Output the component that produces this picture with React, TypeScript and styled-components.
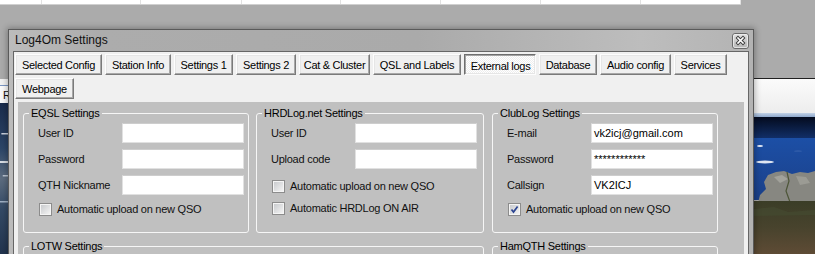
import styled, { createGlobalStyle, css } from "styled-components";

const GlobalStyle = createGlobalStyle`
  html, body { margin: 0; padding: 0; }
  body {
    background: #ababab;
    font-family: "Liberation Sans", Arial, sans-serif;
    font-size: 11px;
    color: #000;
  }
`;

const Desktop = styled.div`
  position: relative;
  width: 815px;
  height: 254px;
  overflow: hidden;
  background: #ababab;
`;

/* ---------- application window behind the dialog ---------- */

const BackApp = styled.div`
  display: grid;
  grid-template-rows: 5px 73px 1fr;
  height: 100%;
`;

const GridHead = styled.div`
  display: flex;
  width: 741px;
  background: #fff;
  border-bottom: 1px solid #d0d0d0;
`;

const GridCell = styled.div<{ $w: number }>`
  flex: none;
  width: ${(p) => p.$w}px;
  box-sizing: border-box;
  border-right: 1px solid #e2e2e2;
`;

const Panes = styled.div`
  grid-row: 3;
  display: flex;
  justify-content: space-between;
  min-height: 0;
`;

const Pane = styled.div<{ $w: number; $top: number; $rows: string }>`
  width: ${(p) => p.$w}px;
  margin-top: ${(p) => p.$top}px;
  display: grid;
  grid-template-rows: ${(p) => p.$rows};
  overflow: hidden;
`;

const LeftBand = styled.div`
  box-sizing: border-box;
  display: flex;
  align-items: flex-end;
  padding: 0 0 1px 3px;
  background: linear-gradient(#f2f2f2 0 6px, #7b97c4 6px 7px, #fbfbfb 7px);
  line-height: 13px;
  color: #111;
`;

const RightBand = styled.div`
  border-top: 1px solid #202020;
  background: linear-gradient(#fbfbfb, #ededed);
`;

const BlueRule = styled.div`
  background: linear-gradient(#c3d2e6, #8ea8cc);
`;

const MapSvg = styled.svg`
  width: 100%;
  height: 100%;
  display: block;
`;

function LeftMap() {
  return (
    <MapSvg viewBox="0 0 8 151" preserveAspectRatio="none">
      <defs>
        <linearGradient id="lm" x1="0" y1="0" x2="0" y2="1">
          <stop offset="0" stopColor="#1a2c4c" />
          <stop offset="0.3" stopColor="#2c4668" />
          <stop offset="0.5" stopColor="#5d6d80" />
          <stop offset="0.7" stopColor="#344a66" />
          <stop offset="1" stopColor="#22344e" />
        </linearGradient>
      </defs>
      <rect width="8" height="151" fill="url(#lm)" />
      <rect x="1" y="30" width="5" height="1.5" fill="#c8d0dc" />
      <rect x="0" y="58" width="7" height="2" fill="#d8dde4" />
      <rect x="2" y="72" width="5" height="1.5" fill="#b9c3d0" />
      <rect x="0" y="98" width="6" height="1.5" fill="#9fb0c4" />
    </MapSvg>
  );
}

function RightMap() {
  return (
    <MapSvg viewBox="0 0 61 137" preserveAspectRatio="none">
      <defs>
        <linearGradient id="rmSky" x1="0" y1="0" x2="0" y2="1">
          <stop offset="0" stopColor="#040b1e" />
          <stop offset="1" stopColor="#12306a" />
        </linearGradient>
        <linearGradient id="rmSea" x1="0" y1="0" x2="0" y2="1">
          <stop offset="0" stopColor="#1c4fa6" />
          <stop offset="1" stopColor="#1b4088" />
        </linearGradient>
        <linearGradient id="rmEarth" x1="0" y1="0" x2="0" y2="1">
          <stop offset="0" stopColor="#3b3d27" />
          <stop offset="0.5" stopColor="#48432d" />
          <stop offset="1" stopColor="#5e4b35" />
        </linearGradient>
      </defs>
      <rect width="61" height="22" fill="url(#rmSky)" />
      <rect y="21" width="61" height="62" fill="url(#rmSea)" />
      <ellipse cx="6" cy="29" rx="3" ry="0.9" fill="#e8eef8" />
      <ellipse cx="11" cy="45" rx="9" ry="1.4" fill="#dfe6f2" />
      <ellipse cx="44" cy="34" rx="4" ry="0.6" fill="#3d66b0" />
      <path
        d="M14 58 L22 55 L30 54 L38 57 L46 55 L54 56 L61 54 L61 86 L4 86 L6 78 L12 72 L10 65 Z"
        fill="#878781"
      />
      <path d="M20 60 L28 58 L34 62 L26 66 Z" fill="#a2a29b" />
      <path d="M42 59 L52 60 L56 66 L46 68 Z" fill="#9b9b94" />
      <path d="M33 55 L35 64 L32 74 L36 85" stroke="#4d5538" strokeWidth="1.2" fill="none" />
      <rect y="84" width="61" height="53" fill="url(#rmEarth)" />
      <path d="M0 92 L20 90 L34 95 L61 93 L61 98 L0 99 Z" fill="#454a30" opacity="0.7" />
    </MapSvg>
  );
}

/* ---------- settings dialog ---------- */

const Dialog = styled.div`
  position: absolute;
  left: 8px;
  top: 29px;
  width: 746px;
  height: 240px;
  box-sizing: border-box;
  display: flex;
  flex-direction: column;
  padding: 0 4px;
  border: 1px solid #5a5a5a;
  border-bottom: none;
  background: linear-gradient(90deg, #bcbcbc 0, #acacac 12%, #aaaaaa 55%, #bdbdbd 85%, #b3b3b3 100%);
  box-shadow: 0 0 6px 1px rgba(0, 0, 0, 0.3);
`;

const TitleBar = styled.div`
  height: 21px;
  margin: 0 -4px;
  padding: 0 4px 0 6px;
  display: flex;
  align-items: flex-start;
  justify-content: space-between;
`;

const Title = styled.span`
  font-size: 12px;
  line-height: 21px;
  color: #111;
`;

const CloseButton = styled.div`
  width: 17px;
  height: 16px;
  margin-top: 3px;
  display: flex;
`;

function CloseIcon() {
  return (
    <svg width="17" height="16" viewBox="0 0 17 16">
      <defs>
        <linearGradient id="cb" x1="0" y1="0" x2="0" y2="1">
          <stop offset="0" stopColor="#e2e2e2" />
          <stop offset="1" stopColor="#b4b4b4" />
        </linearGradient>
      </defs>
      <rect x="0.5" y="0.5" width="16" height="15" rx="2.5" fill="url(#cb)" stroke="#6a6a6a" />
      <rect x="1.5" y="1.5" width="14" height="13" rx="1.5" fill="none" stroke="#f2f2f2" opacity="0.7" />
      <path d="M6 5 L11 10 M11 5 L6 10" stroke="#3a3a3a" strokeWidth="3.4" strokeLinecap="square" />
      <path d="M6 5 L11 10 M11 5 L6 10" stroke="#ffffff" strokeWidth="1.6" strokeLinecap="square" />
    </svg>
  );
}

const Client = styled.div`
  flex: 1;
  display: flex;
  flex-direction: column;
  background: #f0f0f0;
  border: 1px solid #666;
  border-bottom: none;
  padding: 2px 0 0 1px;
`;

const TabStrip = styled.div`
  display: flex;
  flex-direction: column;
  gap: 3px;
`;

const TabRow = styled.div`
  display: flex;
  gap: 3px;
`;

const Tab = styled.div<{ $w: number; $active?: boolean }>`
  flex: none;
  width: ${(p) => p.$w}px;
  height: 21px;
  box-sizing: border-box;
  display: flex;
  align-items: center;
  justify-content: center;
  letter-spacing: -0.3px;
  white-space: nowrap;
  color: #000;
  background: #f0f0f0;
  border: 1px solid;
  border-color: #fdfdfd #7a7a7a #7a7a7a #fdfdfd;
  box-shadow: inset -1px -1px #a8a8a8, inset 1px 1px #e6e6e6;
  ${(p) =>
    p.$active &&
    css`
      padding: 2px 0 0 1px;
      border-color: #6e6e6e #fdfdfd #fdfdfd #6e6e6e;
      box-shadow: inset 1px 1px #a3a3a3, inset -1px -1px #e6e6e6;
      background: repeating-conic-gradient(#ffffff 0 25%, #eeeeee 0 50%) 0 0 / 2px 2px;
    `}
`;

const Page = styled.div`
  flex: 1;
  margin: 3px 4px 0 3px;
  padding: 4px 0 0 5px;
  background: #c0c0c0;
  display: grid;
  grid-template-columns: 226px 229px 226px;
  column-gap: 7px;
  row-gap: 6px;
  align-content: start;
`;

const GroupBox = styled.fieldset<{ $w?: number; $span?: number }>`
  margin: 0;
  padding: 0;
  min-width: 0;
  box-sizing: border-box;
  width: ${(p) => (p.$w ? `${p.$w}px` : "auto")};
  height: 127px;
  grid-column: span ${(p) => p.$span ?? 1};
  border: 1px solid #f6f6f6;
  border-radius: 3px;
`;

const Legend = styled.legend`
  margin-left: 5px;
  padding: 0 2px;
  line-height: 14px;
  letter-spacing: -0.25px;
`;

const Fields = styled.div`
  display: grid;
  grid-template-columns: 84px 122px;
  row-gap: 6px;
  align-items: center;
  padding: 3px 0 0 14px;
  letter-spacing: -0.25px;
`;

const FieldLabel = styled.span`
  color: #111;
  line-height: 13px;
`;

const TextBox = styled.div`
  height: 20px;
  box-sizing: border-box;
  padding: 0 2px;
  line-height: 18px;
  white-space: nowrap;
  overflow: hidden;
  background: #fff;
  border: 1px solid #e1e1e1;
  border-top-color: #cdcdcd;
  letter-spacing: 0;
`;

const CheckRow = styled.label<{ $top?: number }>`
  grid-column: 1 / -1;
  height: 16px;
  margin: ${(p) => p.$top ?? 0}px 0 0 1px;
  display: flex;
  align-items: center;
  gap: 5px;
  color: #111;
  line-height: 13px;
`;

const Box = styled.span`
  flex: none;
  width: 13px;
  height: 13px;
  box-sizing: border-box;
  padding: 1px;
  display: flex;
  border: 1px solid #8c8c8c;
  background: linear-gradient(135deg, #c9cbce, #f3f3f3) content-box, #f5f5f5;
`;

function CheckBox({ checked, label, top }: { checked?: boolean; label: string; top?: number }) {
  return (
    <CheckRow $top={top}>
      <Box>
        {checked && (
          <svg width="9" height="9" viewBox="0 0 9 9">
            <path d="M1.5 4.5 L3.5 7 L7.6 1.4" stroke="#2b4491" strokeWidth="1.7" fill="none" />
          </svg>
        )}
      </Box>
      <span>{label}</span>
    </CheckRow>
  );
}

const tabs: { name: string; w: number; active?: boolean }[] = [
  { name: "Selected Config", w: 87 },
  { name: "Station Info", w: 66 },
  { name: "Settings 1", w: 59 },
  { name: "Settings 2", w: 60 },
  { name: "Cat & Cluster", w: 71 },
  { name: "QSL and Labels", w: 88 },
  { name: "External logs", w: 72, active: true },
  { name: "Database", w: 58 },
  { name: "Audio config", w: 71 },
  { name: "Services", w: 53 },
];

const gridCols = [42, 99, 101, 99, 100, 100, 100, 100];

export default function App() {
  return (
    <>
      <GlobalStyle />
      <Desktop>
        <BackApp>
          <GridHead>
            {gridCols.map((w, i) => (
              <GridCell key={i} $w={w} />
            ))}
          </GridHead>
          <Panes>
            <Pane $w={8} $top={1} $rows="24px 1fr">
              <LeftBand>R</LeftBand>
              <LeftMap />
            </Pane>
            <Pane $w={61} $top={0} $rows="35px 4px 1fr">
              <RightBand />
              <BlueRule />
              <RightMap />
            </Pane>
          </Panes>
        </BackApp>

        <Dialog>
          <TitleBar>
            <Title>Log4Om Settings</Title>
            <CloseButton>
              <CloseIcon />
            </CloseButton>
          </TitleBar>
          <Client>
            <TabStrip>
              <TabRow>
                {tabs.map((t) => (
                  <Tab key={t.name} $w={t.w} $active={t.active}>
                    {t.name}
                  </Tab>
                ))}
              </TabRow>
              <TabRow>
                <Tab $w={59}>Webpage</Tab>
              </TabRow>
            </TabStrip>
            <Page>
              <GroupBox>
                <Legend>EQSL Settings</Legend>
                <Fields>
                  <FieldLabel>User ID</FieldLabel>
                  <TextBox />
                  <FieldLabel>Password</FieldLabel>
                  <TextBox />
                  <FieldLabel>QTH Nickname</FieldLabel>
                  <TextBox />
                  <CheckBox label="Automatic upload on new QSO" />
                </Fields>
              </GroupBox>
              <GroupBox $w={228}>
                <Legend>HRDLog.net Settings</Legend>
                <Fields>
                  <FieldLabel>User ID</FieldLabel>
                  <TextBox />
                  <FieldLabel>Upload code</FieldLabel>
                  <TextBox />
                  <CheckBox label="Automatic upload on new QSO" top={3} />
                  <CheckBox label="Automatic HRDLog ON AIR" />
                </Fields>
              </GroupBox>
              <GroupBox>
                <Legend>ClubLog Settings</Legend>
                <Fields>
                  <FieldLabel>E-mail</FieldLabel>
                  <TextBox>vk2icj@gmail.com</TextBox>
                  <FieldLabel>Password</FieldLabel>
                  <TextBox>************</TextBox>
                  <FieldLabel>Callsign</FieldLabel>
                  <TextBox>VK2ICJ</TextBox>
                  <CheckBox label="Automatic upload on new QSO" checked />
                </Fields>
              </GroupBox>
              <GroupBox $span={2} $w={461}>
                <Legend>LOTW Settings</Legend>
              </GroupBox>
              <GroupBox>
                <Legend>HamQTH Settings</Legend>
              </GroupBox>
            </Page>
          </Client>
        </Dialog>
      </Desktop>
    </>
  );
}
